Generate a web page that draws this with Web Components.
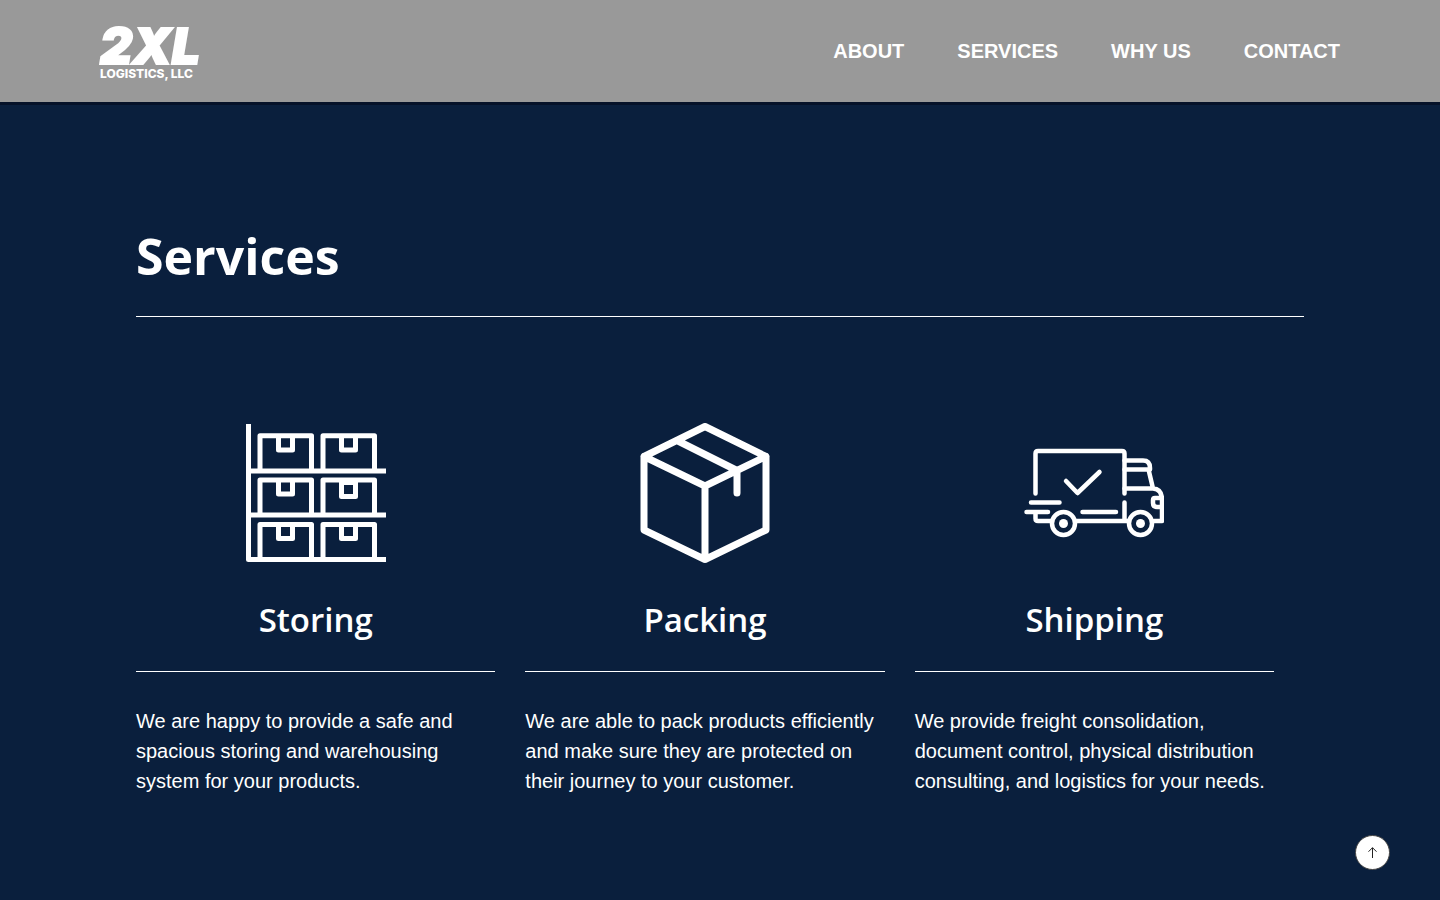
<!DOCTYPE html>
<html lang="en">
<head>
<meta charset="utf-8">
<meta name="viewport" content="width=device-width, initial-scale=1">
<title>2XL Logistics, LLC</title>
<style>
  html { scrollbar-width: none; }
  body { margin: 0; background: #0a1f3d; color: #fff; font: 20px/30px "Liberation Sans", Arial, sans-serif; }
</style>
</head>
<body>
<site-header>
  <site-logo slot="brand"></site-logo>
  <nav-link href="#about">ABOUT</nav-link>
  <nav-link href="#services">SERVICES</nav-link>
  <nav-link href="#why">WHY US</nav-link>
  <nav-link href="#contact">CONTACT</nav-link>
</site-header>
<main>
  <services-section id="services" heading="Services">
    <service-card heading="Storing">
      <shelf-icon slot="icon"></shelf-icon>
      We are happy to provide a safe and spacious storing and warehousing system for your products.
    </service-card>
    <service-card heading="Packing">
      <box-icon slot="icon"></box-icon>
      We are able to pack products efficiently and make sure they are protected on their journey to your customer.
    </service-card>
    <service-card heading="Shipping">
      <truck-icon slot="icon"></truck-icon>
      We provide freight consolidation, document control, physical distribution consulting, and logistics for your needs.
    </service-card>
  </services-section>
</main>
<back-to-top></back-to-top>

<script>
  const define = (name, markup, setup) => {
    const template = document.createElement('template');
    template.innerHTML = markup;
    customElements.define(name, class extends HTMLElement {
      constructor() {
        super();
        this.attachShadow({ mode: 'open' }).append(template.content.cloneNode(true));
      }
      connectedCallback() { if (setup) setup(this, this.shadowRoot); }
    });
  };

  define('site-header', `
    <style>
      :host { display: block; position: relative; z-index: 1; background: #999; border-bottom: 3px solid #061229; }
      header { display: flex; align-items: center; justify-content: space-between; min-height: 102px; padding: 0 100px; }
      nav { display: flex; gap: 53px; }
    </style>
    <header><slot name="brand"></slot><nav aria-label="Main"><slot></slot></nav></header>`);

  define('site-logo', `
    <style>
      :host { display: block; }
      a { display: block; padding-top: 4px; color: #fff; text-decoration: none; font-family: Inter, sans-serif; white-space: nowrap; }
      .mark { display: block; font-size: 50px; line-height: 42px; font-weight: 900; font-style: italic; -webkit-text-stroke: 2px #fff; }
      .name { display: block; font-size: 12px; line-height: 14px; font-weight: 800; }
    </style>
    <a href="#"><span class="mark">2XL</span><span class="name">LOGISTICS, LLC</span></a>`);

  define('nav-link', `
    <style>
      :host { display: block; }
      a { color: #fff; text-decoration: none; font-size: 20px; line-height: 30px; font-weight: 700; white-space: nowrap; }
    </style>
    <a><slot></slot></a>`,
    (el, root) => { root.querySelector('a').href = el.getAttribute('href'); });

  define('services-section', `
    <style>
      :host { display: block; padding: 114px 136px 96px; }
      h2 { margin: 0; padding-bottom: 22px; border-bottom: 1px solid #fff; font: 700 50px/75px "Open Sans", sans-serif; }
      .cards { display: grid; grid-template-columns: repeat(3, 1fr); gap: 30px; padding: 106px 30px 0 0; }
    </style>
    <section aria-labelledby="title"><h2 id="title"></h2><div class="cards"><slot></slot></div></section>`,
    (el, root) => { root.querySelector('h2').textContent = el.getAttribute('heading'); });

  define('service-card', `
    <style>
      :host { display: block; }
      .icon { display: flex; justify-content: center; }
      h3 { margin: 0; padding: 32px 0 26px; border-bottom: 1px solid #fff; font: 600 33px/50px "Open Sans", sans-serif; text-align: center; }
      p { margin: 0; padding-top: 34px; }
    </style>
    <article><div class="icon"><slot name="icon"></slot></div><h3></h3><p><slot></slot></p></article>`,
    (el, root) => { root.querySelector('h3').textContent = el.getAttribute('heading'); });

  const iconStyle = `<style>
      :host { display: block; }
      svg { display: block; width: 140px; height: 140px; fill: none; stroke: #fff; stroke-width: 5; stroke-linejoin: round; }
    </style>`;

  define('shelf-icon', iconStyle + `
    <svg viewBox="0 0 140 140" aria-hidden="true">
      <path d="M2.500 1V136.500H140M2.500 48H140M2.500 92H140"/>
      <path d="M14 48V12.800H65.500V48M32.500 13V27H46.500V13M77 48V12.800H128.500V48M95.500 13V27H109.500V13"/>
      <path d="M14 92V57H65.500V92M32.500 57V71H46.500V57M77 92V57H128.500V92M95.500 59.500V73.500H109.500V59.500ZM95.500 57V62M109.500 57V62"/>
      <path d="M14 136V101.500H65.500V136M32.500 101.500V115.500H46.500V101.500M77 136V101.500H128.500V136M95.500 101.500V115.500H109.500V101.500"/>
    </svg>`);

  define('box-icon', iconStyle + `
    <svg viewBox="0 0 140 140" aria-hidden="true" style="stroke-width:7;stroke-linecap:round">
      <path d="M70 3.500L131 33.500V107L70 136.500L9 107V33.500ZM9 33.500L70 63L131 33.500M70 63V136.500M42 17.500L102 47.500V70"/>
    </svg>`);

  define('truck-icon', iconStyle + `
    <svg viewBox="0 0 140 140" aria-hidden="true" style="stroke-width:4.500;stroke-linecap:round">
      <path d="M11.500 70.500V30.500Q11.500 28 14 28H98Q100.500 28 100.500 30.500V70.500M100.500 79.500V97"/>
      <path d="M100.500 37.500H119Q126 37.500 126 45V46.500H100.500M124.500 46.500L129 65.500M100.500 65.500H129Q138 66 138 77V98H130M137 75H131Q129 75 129 77V80Q129 84 133 84H137"/>
      <path d="M42 58L53.500 70L75.500 49"/>
      <path d="M7 79.500H35.500M2.500 89H24M11.500 90V95.500Q11.500 98 14 98H28M52 98H104M58.500 89H92"/>
      <circle cx="39.500" cy="100.500" r="11.500"/><circle cx="116.500" cy="100.500" r="11.500"/>
      <circle cx="39.500" cy="100.500" r="4.500" fill="#fff" stroke="none"/><circle cx="116.500" cy="100.500" r="4.500" fill="#fff" stroke="none"/>
    </svg>`);

  define('back-to-top', `
    <style>
      :host { display: block; position: fixed; right: 50px; bottom: 30px; z-index: 2; }
      button { display: flex; align-items: center; justify-content: center; width: 35px; height: 35px; box-sizing: border-box; padding: 0; border: 1px solid #444; border-radius: 50%; background: #fff; cursor: pointer; }
      svg { display: block; width: 11px; height: 11px; fill: none; stroke: #222; }
    </style>
    <button type="button" aria-label="Back to top"><svg viewBox="0 0 11 11" aria-hidden="true"><path d="M5.500 11V.7M1.500 4.700L5.500 .7L9.500 4.700"/></svg></button>`,
    (el, root) => { root.querySelector('button').onclick = () => window.scrollTo({ top: 0, behavior: 'smooth' }); });
</script>
</body>
</html>
